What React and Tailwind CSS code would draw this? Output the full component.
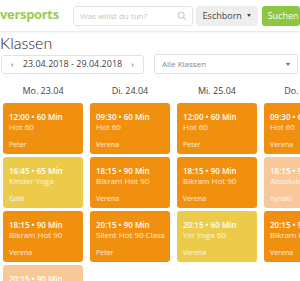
import React from "react";

const ORANGE = "bg-[#f0900e]";
const YELLOW = "bg-[#eccb4a]";
const PEACH = "bg-[#f8c899]";

const days = [
  {
    label: "Mo. 23.04",
    classes: [
      { time: "12:00 • 60 Min", name: "Hot 60", teacher: "Peter", color: ORANGE },
      { time: "16:45 • 65 Min", name: "Kinder Yoga", teacher: "Gabi", color: YELLOW },
      { time: "18:15 • 90 Min", name: "Bikram Hot 90", teacher: "Verena", color: ORANGE },
      { time: "20:15 • 90 Min", name: "Bikram Hot 90", teacher: "Verena", color: PEACH },
    ],
  },
  {
    label: "Di. 24.04",
    classes: [
      { time: "09:30 • 60 Min", name: "Hot 60", teacher: "Verena", color: ORANGE },
      { time: "18:15 • 90 Min", name: "Bikram Hot 90", teacher: "Verena", color: ORANGE },
      { time: "20:15 • 90 Min", name: "Silent Hot 90 Class", teacher: "Peter", color: ORANGE },
    ],
  },
  {
    label: "Mi. 25.04",
    classes: [
      { time: "12:00 • 60 Min", name: "Hot 60", teacher: "Peter", color: ORANGE },
      { time: "18:15 • 90 Min", name: "Bikram Hot 90", teacher: "Verena", color: ORANGE },
      { time: "20:15 • 60 Min", name: "Yin Yoga 60", teacher: "Verena", color: YELLOW },
    ],
  },
  {
    label: "Do. 26.04",
    classes: [
      { time: "09:30 • 60 Min", name: "Hot 60", teacher: "Verena", color: ORANGE },
      { time: "18:15 • 90 Min", name: "Absolute Hot", teacher: "Kyriaki", color: PEACH },
      { time: "20:15 • 90 Min", name: "Bikram Hot 90", teacher: "Verena", color: ORANGE },
    ],
  },
];

function ClassCard({ c }) {
  return (
    <div className={`${c.color} rounded-[3px] h-[51px] flex flex-col justify-between pt-[9px] pb-[5px] px-[6px] text-white overflow-hidden`}>
      <div className="leading-[10px]">
        <div className="text-[8px] font-semibold whitespace-nowrap">{c.time}</div>
        <div className="text-[8px] text-white/80 whitespace-nowrap">{c.name}</div>
      </div>
      <div className="text-[7px] text-white/85 leading-[9px]">{c.teacher}</div>
    </div>
  );
}

export default function App() {
  return (
    <div className="w-[300px] h-[281px] overflow-hidden bg-white text-[#333]" style={{ fontFamily: "'Open Sans', 'Noto Sans', sans-serif" }}>
      <div className="h-[31px] flex items-center bg-white shadow-[0_1px_2px_rgba(0,0,0,0.12)] relative z-10">
        <div className="w-[77px] text-[13px] font-bold text-[#9bcb4e] -mt-[2px] tracking-tight">versports</div>
        <div className="w-[125px] h-[20px] border border-[#e4e4e4] rounded-[3px] flex items-center justify-between pl-[6px] pr-[5px]">
          <span className="text-[8px] text-[#c4c4c4]">Was willst du tun?</span>
          <svg width="10" height="10" viewBox="0 0 24 24" fill="none" stroke="#c8c8c8" strokeWidth="2.5">
            <circle cx="10" cy="10" r="7" />
            <path d="M15 15l6 6" />
          </svg>
        </div>
        <div className="ml-[3px] w-[65px] h-[20px] bg-[#eeeeee] rounded-[3px] flex items-center justify-center gap-[5px] text-[9px] text-[#444]">
          Eschborn
          <span className="w-0 h-0 border-l-[2.5px] border-r-[2.5px] border-t-[3px] border-l-transparent border-r-transparent border-t-[#444]" />
        </div>
        <div className="ml-[4px] w-[40px] h-[20px] bg-[#8dc63f] rounded-[3px] flex items-center pl-[6px] text-[9px] text-white">
          Suchen
        </div>
      </div>

      <div className="text-[16px] leading-[20px] text-[#222] mt-[2px] font-light" style={{ fontFamily: "Lato, 'Open Sans', sans-serif" }}>Klassen</div>

      <div className="flex items-center mt-[1px] gap-[10px]">
        <div className="ml-[1px] w-[143px] h-[19px] border border-[#e2e2e2] rounded-[3px] flex items-center justify-between px-[9px] text-[9px] text-[#444]">
          <span className="text-[8px]">‹</span>
          <span>23.04.2018 - 29.04.2018</span>
          <span className="text-[8px]">›</span>
        </div>
        <div className="w-[144px] h-[20px] border border-[#e2e2e2] rounded-[3px] flex items-center justify-between pl-[7px] pr-[7px] text-[8px] text-[#888]">
          <span>Alle Klassen</span>
          <span className="w-0 h-0 border-l-[2px] border-r-[2px] border-t-[3px] border-l-transparent border-r-transparent border-t-[#666]" />
        </div>
      </div>

      <div className="flex gap-[7px] pl-[3px] mt-[11px]">
        {days.map((d) => (
          <div key={d.label} className="w-[80px] shrink-0">
            <div className="text-[9px] text-[#444] text-center leading-[12px] whitespace-nowrap">{d.label}</div>
            <div className="mt-[6px] flex flex-col gap-[3px]">
              {d.classes.map((c, i) => (
                <ClassCard key={i} c={c} />
              ))}
            </div>
          </div>
        ))}
      </div>
    </div>
  );
}
